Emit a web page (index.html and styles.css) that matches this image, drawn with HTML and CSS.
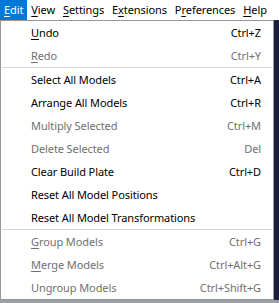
FILE: index.html
```html
<!DOCTYPE html>
<html>
<head>
<meta charset="utf-8">
<link rel="stylesheet" href="styles.css">
</head>
<body>
<div class="menubar">
  <span class="mb-item active"><u>E</u>dit</span>
  <span class="mb-item"><u>V</u>iew</span>
  <span class="mb-item"><u>S</u>ettings</span>
  <span class="mb-item">E<u>x</u>tensions</span>
  <span class="mb-item">P<u>r</u>eferences</span>
  <span class="mb-item"><u>H</u>elp</span>
</div>
<div class="scene"></div>
<div class="menu">
  <div class="row"><span><u>U</u>ndo</span><span class="sc">Ctrl+Z</span></div>
  <div class="row dis"><span><u>R</u>edo</span><span class="sc">Ctrl+Y</span></div>
  <div class="sep"></div>
  <div class="row"><span>Select All Models</span><span class="sc">Ctrl+A</span></div>
  <div class="row"><span>Arrange All Models</span><span class="sc">Ctrl+R</span></div>
  <div class="row dis"><span>Multiply Selected</span><span class="sc">Ctrl+M</span></div>
  <div class="row dis"><span>Delete Selected</span><span class="sc">Del</span></div>
  <div class="row"><span>Clear Build Plate</span><span class="sc">Ctrl+D</span></div>
  <div class="row"><span>Reset All Model Positions</span><span class="sc"></span></div>
  <div class="row"><span>Reset All Model Transformations</span><span class="sc"></span></div>
  <div class="sep"></div>
  <div class="row dis"><span><u>G</u>roup Models</span><span class="sc">Ctrl+G</span></div>
  <div class="row dis"><span><u>M</u>erge Models</span><span class="sc">Ctrl+Alt+G</span></div>
  <div class="row dis"><span>Ungroup Models</span><span class="sc">Ctrl+Shift+G</span></div>
</div>
</body>
</html>
```
FILE: styles.css
```css
html, body {
  margin: 0;
  padding: 0;
  width: 279px;
  height: 303px;
  overflow: hidden;
}
body {
  font-family: "Noto Sans", "Open Sans", sans-serif;
  font-size: 11px;
  letter-spacing: -0.1px;
  background: #9b9ea4;
  position: relative;
}
.menubar {
  height: 20px;
  background: #ffffff;
  display: flex;
  align-items: stretch;
  color: #000;
}
.mb-item {
  display: flex;
  align-items: center;
  padding: 0 4px;
  line-height: 20px;
}
.mb-item.active {
  background: #0078d7;
  color: #fff;
}
.scene {
  height: 280px;
  background: #1b1f3b;
}
.menu {
  position: absolute;
  left: 0;
  top: 20px;
  width: 272px;
  background: #fff;
  border: 1px solid #979797;
  box-sizing: content-box;
}
.row {
  height: 23px;
  display: flex;
  align-items: center;
  justify-content: space-between;
  padding: 0 12px 0 30px;
  color: #000;
  white-space: nowrap;
}
.row.dis {
  color: #707070;
}
.sep {
  height: 0;
  margin: 0 1px;
  border-top: 1px solid #d7d7d7;
}
u {
  text-decoration: underline;
  text-underline-offset: 2px;
}
```
